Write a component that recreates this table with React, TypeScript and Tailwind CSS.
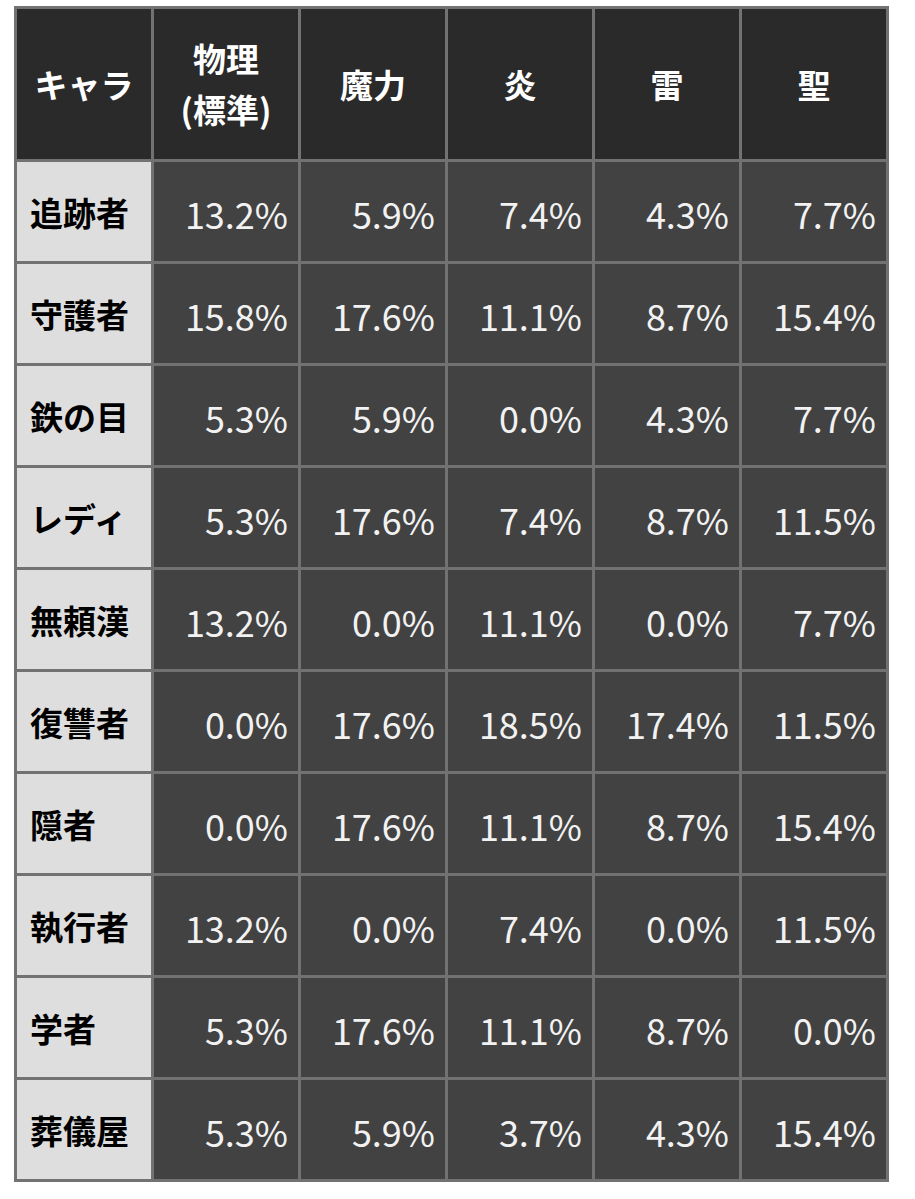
const headers = ['キャラ', '物理\n(標準)', '魔力', '炎', '雷', '聖'];

const rows: [string, string[]][] = [
  ['追跡者', ['13.2%', '5.9%', '7.4%', '4.3%', '7.7%']],
  ['守護者', ['15.8%', '17.6%', '11.1%', '8.7%', '15.4%']],
  ['鉄の目', ['5.3%', '5.9%', '0.0%', '4.3%', '7.7%']],
  ['レディ', ['5.3%', '17.6%', '7.4%', '8.7%', '11.5%']],
  ['無頼漢', ['13.2%', '0.0%', '11.1%', '0.0%', '7.7%']],
  ['復讐者', ['0.0%', '17.6%', '18.5%', '17.4%', '11.5%']],
  ['隠者', ['0.0%', '17.6%', '11.1%', '8.7%', '15.4%']],
  ['執行者', ['13.2%', '0.0%', '7.4%', '0.0%', '11.5%']],
  ['学者', ['5.3%', '17.6%', '11.1%', '8.7%', '0.0%']],
  ['葬儀屋', ['5.3%', '5.9%', '3.7%', '4.3%', '15.4%']],
];

export default function App() {
  return (
    <div className="min-h-screen bg-white pl-[14px] pt-[6px] font-['Noto_Sans_CJK_JP',sans-serif]">
      <div className="grid w-[875px] grid-cols-[134px_repeat(5,144px)] grid-rows-[150px_repeat(10,99px)] gap-[3px] bg-[#727272] p-[3px]">
        {headers.map(h => (
          <div
            key={h}
            className="flex items-center justify-center whitespace-pre-line bg-[#2a2a2a] text-center text-[33px] font-bold leading-[51px] text-white"
          >
            {h}
          </div>
        ))}
        {rows.map(([name, values]) => (
          <>
            <div key={name} className="flex items-center bg-[#dedede] pl-[13px] pt-[3px] text-[33px] font-bold text-black">
              {name}
            </div>
            {values.map((v, i) => (
              <div
                key={name + i}
                className="flex items-center justify-end bg-[#424242] pr-[10px] pt-[2px] text-[36px] text-[#f2f2f2]"
              >
                {v}
              </div>
            ))}
          </>
        ))}
      </div>
    </div>
  );
}
